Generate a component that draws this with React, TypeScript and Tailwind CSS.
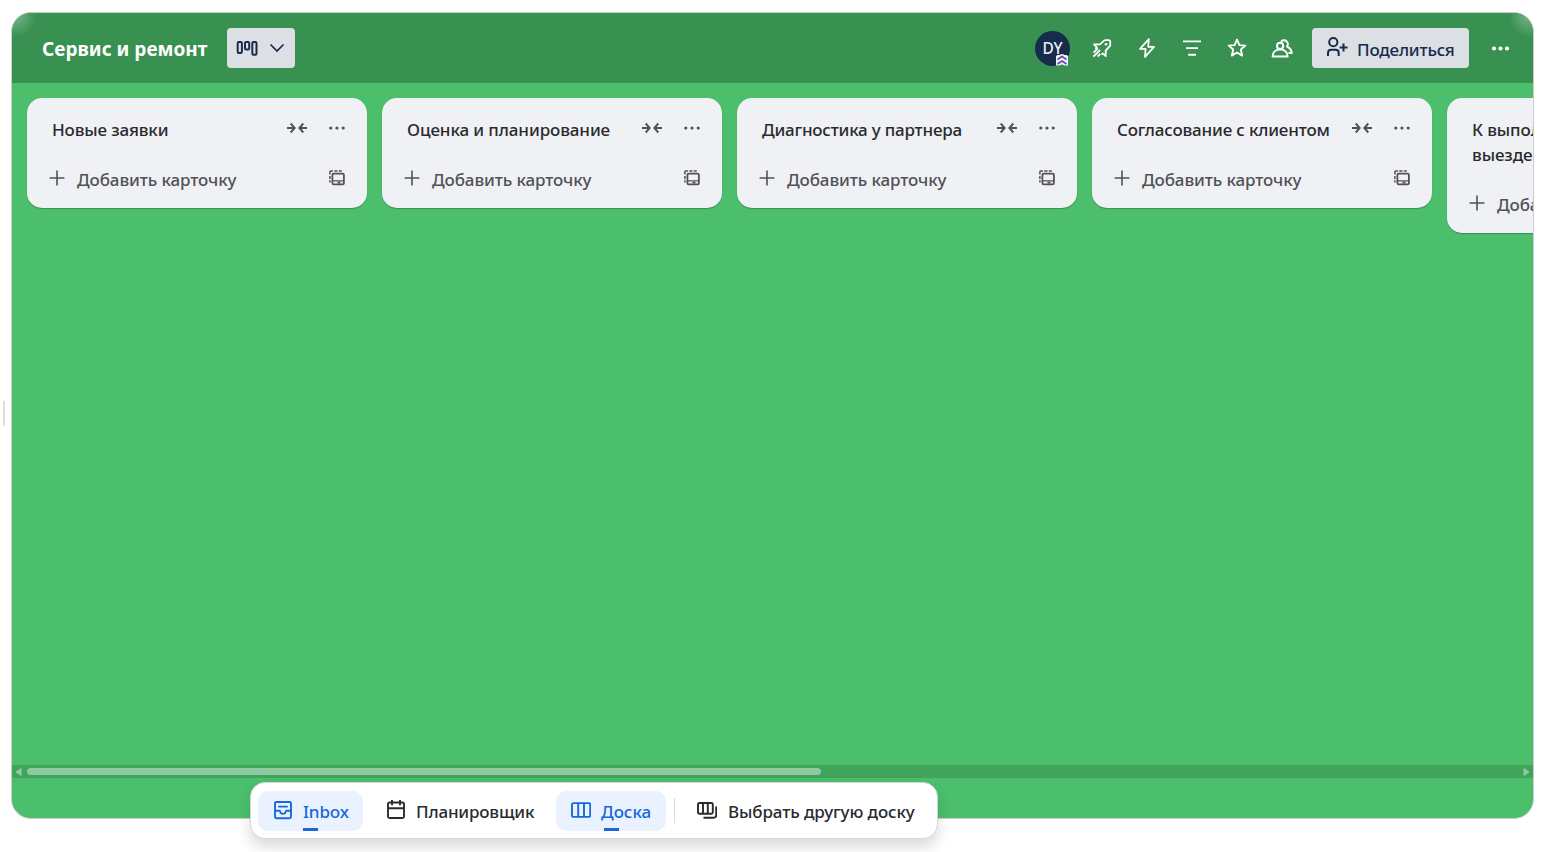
import React from "react";

type IconProps = { size?: number; box?: number; sw?: number; className?: string; children: React.ReactNode };

function Icon({ size = 20, box = 20, sw = 1.8, className = "", children }: IconProps) {
  return (
    <svg
      width={size}
      height={size}
      viewBox={`0 0 ${box} ${box}`}
      fill="none"
      stroke="currentColor"
      strokeWidth={sw}
      className={`block shrink-0 ${className}`}
    >
      {children}
    </svg>
  );
}

const BoardViewIcon = () => (
  <svg width="22" height="20" viewBox="0 0 22 20" fill="none" stroke="currentColor" strokeWidth="2" className="block shrink-0">
    <rect x="1.700" y="4" width="4.200" height="11" rx="1.2" />
    <rect x="9" y="4" width="4.200" height="7.500" rx="1.2" />
    <rect x="16.300" y="4" width="4.200" height="12.800" rx="1.2" />
  </svg>
);

const RocketIcon = () => (
  <Icon sw={1.8}>
    <path
      d="M12.600 2.200H16.800a1.400 1.400 0 0 1 1.400 1.400V7.600L13.700 12.600V18L10.700 15.300 9.400 16.600M12.600 2.200L7.900 6.400H2L4.900 9.300 3.400 10.800"
      strokeLinejoin="round"
    />
    <path d="M1.400 18.600L8 12M1.600 14.600L5.800 10.400M5.600 18.500L8.300 15.800" />
    <circle cx="14" cy="6.300" r="1.300" fill="currentColor" stroke="none" />
  </Icon>
);

const BoltIcon = () => (
  <Icon sw={1.8}>
    <path d="M11.800 1.200L3 10.800H8.600L8 18.800L17 8.800H11.200Z" strokeLinejoin="round" />
  </Icon>
);

const FilterIcon = () => (
  <Icon sw={1.9}>
    <path d="M1 3.400H19M4 10.100H16M6.200 16.700H14" />
  </Icon>
);

const StarIcon = () => (
  <Icon sw={1.9}>
    <path d="M10 1.600L12.400 7.100L18.300 7.600L13.800 11.500L15.200 17.600L10 14.500L4.800 17.600L6.200 11.500L1.700 7.600L7.600 7.100Z" strokeLinejoin="round" />
  </Icon>
);

const PeopleIcon = () => (
  <Icon size={22} box={22} sw={2}>
    <circle cx="9.100" cy="8.900" r="3.100" />
    <path d="M1.600 19.400c0-4 3-6.900 7.500-6.900s7.500 2.900 7.500 6.900Z" strokeLinejoin="round" />
    <path d="M10 4.800a3.800 3.800 0 1 1 6 4.700c2.600 1.200 4.400 3.300 4.700 6.600h-3.300" strokeLinejoin="round" />
  </Icon>
);

const AddPersonIcon = () => (
  <Icon size={22} box={22} sw={2} className="mb-[2px] ml-[1px]">
    <circle cx="7.300" cy="6.200" r="4.100" />
    <path d="M2 20v-3c0-2 1.300-3.200 3.200-3.200h4.300c1.900 0 3.200 1.200 3.200 3.200v3M17.500 7.500v8M13.600 11.500h7.900" />
  </Icon>
);

const DotsIcon = ({ size = 20, r = 1.6 }: { size?: number; r?: number }) => (
  <svg width={size} height={size} viewBox="0 0 20 20" fill="currentColor" className="block shrink-0">
    <circle cx="3.800" cy="10" r={r} />
    <circle cx="10" cy="10" r={r} />
    <circle cx="16.200" cy="10" r={r} />
  </svg>
);

const CollapseIcon = () => (
  <svg width="20" height="14" viewBox="0 0 20 14" fill="none" stroke="currentColor" strokeWidth="1.900" className="block shrink-0">
    <path d="M0 7H7.200M3.700 2.500L7.700 7L3.700 11.500M20 7H12.800M16.300 2.500L12.300 7L16.300 11.500" />
  </svg>
);

const TemplateIcon = () => (
  <Icon size={16} box={16} sw={1.800}>
    <rect x="3.400" y="3.700" width="11.500" height="10.600" rx="1.300" />
    <path d="M3.900 10.800H15" strokeWidth="1.300" />
    <path d="M8.500 12.600h3" />
    <path d="M.9 12.500v-2.200M.9 8.900v-3M.9 4.500V2.100a1 1 0 0 1 1-1H4M5.300 1.100h3.200M9.800 1.100h3" strokeWidth="1.500" />
  </Icon>
);

const InboxIcon = () => (
  <Icon sw={1.900} className="mb-[2px]">
    <rect x="2" y="2" width="16" height="16.200" rx="1.500" />
    <path d="M5.200 6.600h9.600M2 10.800h4.400c.6 0 .8.400.9 1 .2 1.200 1.200 2 2.700 2s2.500-.8 2.700-2c.1-.6.300-1 .9-1H18" />
  </Icon>
);

const CalendarIcon = () => (
  <Icon sw={1.900} className="mb-[2px]">
    <rect x="2" y="2.500" width="16" height="15.500" rx="1.500" />
    <path d="M2 8.200h16M6 0v5.200M14 0v5.200" />
  </Icon>
);

const BoardIcon = () => (
  <Icon sw={1.900} className="mb-[2px]">
    <rect x="1" y="3.100" width="18.200" height="13.800" rx="1.500" />
    <path d="M7.200 3v13.900M13 3v13.900" />
  </Icon>
);

const SwitchBoardIcon = () => (
  <Icon sw={1.900} className="mb-[1px]">
    <rect x="1" y="3" width="14.800" height="10.800" rx="1.500" />
    <path d="M6 3v10.800M10.800 3v10.800M19.200 6.500v8.700a2.500 2.500 0 0 1-2.500 2.500H6.500" />
  </Icon>
);

type ListData = { title: string; titleClass: string; wrapped?: boolean };

const lists: ListData[] = [
  { title: "Новые заявки", titleClass: "tracking-[-0.15px]" },
  { title: "Оценка и планирование", titleClass: "tracking-[-0.1px]" },
  { title: "Диагностика у партнера", titleClass: "tracking-[-0.21px]" },
  { title: "Согласование с клиентом", titleClass: "tracking-[-0.17px]" },
  { title: "К выполнению на выезде", titleClass: "tracking-[-0.1px]", wrapped: true },
];

function ListCard({ title, titleClass, wrapped }: ListData) {
  return (
    <section className="flex w-[340px] shrink-0 flex-col rounded-[15px] bg-[#f0f1f4] pt-[10px] pb-[10px] shadow-[0_1px_1px_rgba(30,31,33,0.3)]">
      <div className="flex items-start pr-[20px] pl-[25px]">
        <h2 className={`grow pt-[9px] pb-[6px] text-[17px] leading-[25px] font-medium whitespace-nowrap text-[#292a2e] ${titleClass}`}>
          {wrapped ? (
            <>
              К выполнению на
              <br />
              выезде
            </>
          ) : (
            title
          )}
        </h2>
        <div className="flex h-[40px] items-center gap-[20px] text-[#505258]">
          <CollapseIcon />
          <DotsIcon />
        </div>
      </div>
      <div className="mt-[10px] flex h-[40px] items-center pr-[22px] pl-[22px] text-[#505258]">
        <Icon size={16} box={16} sw={1.600}>
          <path d="M8 .600V15.400M.600 8H15.400" />
        </Icon>
        <span className="mt-[3px] ml-[12px] grow text-[17px] font-medium whitespace-nowrap tracking-[-0.1px]">Добавить карточку</span>
        <TemplateIcon />
      </div>
    </section>
  );
}

function HeaderButton({ children }: { children: React.ReactNode }) {
  return <button className="flex size-[40px] items-center justify-center text-white">{children}</button>;
}

function Header() {
  return (
    <header className="flex h-[70px] shrink-0 items-center bg-[#399151] bg-[radial-gradient(circle_at_4px_4px,rgba(255,255,255,0.3),transparent_20px),radial-gradient(circle_at_calc(100%-4px)_4px,rgba(255,255,255,0.3),transparent_20px)] pr-[13px] pl-[30px]">
      <h1 className="w-[185px] pt-[2px] text-[19px] font-bold whitespace-nowrap tracking-[0.02px] text-white">Сервис и ремонт</h1>
      <button className="flex h-[40px] w-[68px] items-center justify-between rounded-[4px] bg-[#dcdfe4] pr-[10px] pl-[9px] text-[#172b4d]">
        <BoardViewIcon />
        <Icon size={16} box={16} sw={1.700}>
          <path d="M1.500 4.500L8 11L14.500 4.500" />
        </Icon>
      </button>
      <div className="ml-auto flex items-center">
        <div className="relative mr-[12px] flex size-[35px] items-center justify-center rounded-full bg-[#172b4d] pt-[1px] text-[15.500px] font-medium text-[#eceef2]">
          DY
          <svg width="12" height="12" viewBox="0 0 12 12" className="absolute right-[2px] bottom-0">
            <path d="M1.500 1H3L6 0L9 1H10.500L12 2V11.500H9L6 10.500L3 11.500H0V2Z" fill="#f0f1f4" />
            <path d="M1.500 5.500L6 2.500L10.500 5.500M1.500 10L6 7L10.500 10" fill="none" stroke="#5e4db2" strokeWidth="1.600" />
          </svg>
        </div>
        <div className="flex items-center gap-[5px]">
          <HeaderButton><RocketIcon /></HeaderButton>
          <HeaderButton><BoltIcon /></HeaderButton>
          <HeaderButton><FilterIcon /></HeaderButton>
          <HeaderButton><StarIcon /></HeaderButton>
          <HeaderButton><PeopleIcon /></HeaderButton>
        </div>
        <button className="mr-[11px] ml-[10px] flex h-[40px] w-[157px] items-center rounded-[4px] bg-[#dcdfe4] pl-[13px] text-[#172b4d]">
          <AddPersonIcon />
          <span className="mt-[3px] ml-[9px] text-[17px] font-medium whitespace-nowrap tracking-[-0.2px]">Поделиться</span>
        </button>
        <HeaderButton><DotsIcon size={21} r={2} /></HeaderButton>
      </div>
    </header>
  );
}

function HorizontalScrollbar() {
  return (
    <div className="flex h-[13px] shrink-0 items-center bg-[#41a45b]">
      <svg width="15" height="13" viewBox="0 0 15 13" className="block shrink-0">
        <path d="M9 3.500V10.500L4 7Z" fill="#8fcca0" stroke="#8fcca0" strokeLinejoin="round" />
      </svg>
      <div className="h-[7px] w-[794px] rounded-full bg-[#8dca9f]" />
      <svg width="10" height="13" viewBox="0 0 10 13" className="ml-auto block shrink-0">
        <path d="M1 3.500V10.500L6 7Z" fill="#8fcca0" stroke="#8fcca0" strokeLinejoin="round" />
      </svg>
    </div>
  );
}

function Dock() {
  return (
    <nav className="absolute top-[782px] left-[250px] flex h-[57px] w-[688px] items-center rounded-[15px] border border-[#d5d8d8] bg-white pl-[7px] text-[17px] font-medium text-[#292a2e] shadow-[0_8px_14px_rgba(30,31,33,0.16)]">
      <button className="relative flex h-[40px] w-[105px] items-center rounded-[10px] bg-[#e9f2fe] pl-[15px] text-[#1868db]">
        <InboxIcon />
        <span className="mt-[3px] ml-[10px] whitespace-nowrap tracking-[-0.15px]">Inbox</span>
        <span className="absolute bottom-0 left-[45px] h-[3px] w-[15px] bg-[#1868db]" />
      </button>
      <button className="ml-[8px] flex h-[40px] w-[185px] items-center pl-[15px]">
        <CalendarIcon />
        <span className="mt-[3px] ml-[10px] whitespace-nowrap tracking-[-0.18px]">Планировщик</span>
      </button>
      <button className="relative flex h-[40px] w-[110px] items-center rounded-[10px] bg-[#e9f2fe] pl-[15px] text-[#1868db]">
        <BoardIcon />
        <span className="mt-[3px] ml-[10px] whitespace-nowrap">Доска</span>
        <span className="absolute bottom-0 left-[48px] h-[3px] w-[15px] bg-[#1868db]" />
      </button>
      <div className="ml-[8px] h-[25px] w-px bg-[#d9dbdf]" />
      <button className="ml-[22px] flex h-[40px] items-center">
        <SwitchBoardIcon />
        <span className="mt-[3px] ml-[11px] whitespace-nowrap tracking-[-0.1px]">Выбрать другую доску</span>
      </button>
    </nav>
  );
}

export default function App() {
  return (
    <div className="relative flex h-[852px] w-[1548px] items-start overflow-hidden bg-white font-['Noto_Sans',sans-serif]">
      <div className="mt-[401px] ml-[3px] h-[25px] w-[2px] bg-[#dddee1]" />
      <main className="mt-[12px] ml-[6px] flex h-[807px] w-[1523px] flex-col overflow-hidden rounded-[20px] border border-[#cccdcf] bg-[#4bbf6b]">
        <Header />
        <div className="flex min-h-0 grow items-start gap-[15px] overflow-hidden px-[15px] pt-[15px]">
          {lists.map((list) => (
            <ListCard key={list.title} {...list} />
          ))}
        </div>
        <HorizontalScrollbar />
        <div className="h-[40px] shrink-0" />
      </main>
      <Dock />
    </div>
  );
}
